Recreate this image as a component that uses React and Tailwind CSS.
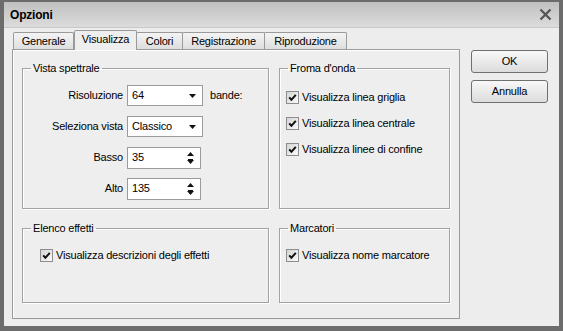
import React from 'react';

function Check({ label }) {
  return (
    <div className="flex items-center h-[16px]">
      <span className="w-[13px] h-[13px] border border-[#8d8d8d] bg-gradient-to-br from-[#d4d4d4] to-[#fbfbfb] flex items-center justify-center">
        <svg width="9" height="9" viewBox="0 0 9 9">
          <path d="M1.2 4.4 L3.4 6.8 L7.8 1.8" fill="none" stroke="#111" strokeWidth="2" />
        </svg>
      </span>
      <span className="ml-[3px] text-[11px] text-black leading-none">{label}</span>
    </div>
  );
}

function DownArrow() {
  return (
    <svg width="7" height="4" viewBox="0 0 7 4">
      <polygon points="0,0 7,0 3.5,4" fill="#111" />
    </svg>
  );
}

function Combo({ value }) {
  return (
    <div className="w-[76px] h-[21px] bg-white border border-[#9b9b9b] flex items-center pl-[4px] pr-[6px]">
      <span className="flex-1 text-[11px] leading-none">{value}</span>
      <DownArrow />
    </div>
  );
}

function Spin({ value }) {
  return (
    <div className="w-[74px] h-[22px] bg-white border border-[#9b9b9b] flex items-center pl-[4px] pr-[6px]">
      <span className="flex-1 text-[11px] leading-none">{value}</span>
      <div className="flex flex-col items-center gap-[3px]">
        <svg width="7" height="4" viewBox="0 0 7 4">
          <polygon points="0,4 7,4 3.5,0" fill="#111" />
        </svg>
        <svg width="7" height="5" viewBox="0 0 7 5">
          <rect x="1" y="0" width="5" height="1" fill="#111" />
          <polygon points="0,1 7,1 3.5,5" fill="#111" />
        </svg>
      </div>
    </div>
  );
}

function Group({ title, className, children }) {
  return (
    <fieldset className={`border border-[#a2a2a2] shadow-[inset_1px_1px_0_#fff,1px_1px_0_#fff] ${className}`}>
      <legend className="ml-[8px] px-[2px] text-[11px] leading-[13px] text-black">{title}</legend>
      {children}
    </fieldset>
  );
}

function Row({ label, children }) {
  return (
    <div className="flex items-center h-[21px]">
      <span className="w-[104px] text-right text-[11px] pr-[4px]">{label}</span>
      {children}
    </div>
  );
}

export default function App() {
  const tabs = [
    { name: 'Generale', w: 'w-[61px]' },
    { name: 'Visualizza', w: 'w-[63px]', active: true },
    { name: 'Colori', w: 'w-[47px]' },
    { name: 'Registrazione', w: 'w-[83px]' },
    { name: 'Riproduzione', w: 'w-[83px]' },
  ];

  return (
    <div className="w-[563px] h-[331px] flex flex-col bg-[#ededed] border-t-[2px] border-x-[4px] border-b-[5px] border-[#6c6c6c] font-['Liberation_Sans',Arial,sans-serif] tracking-[-0.2px] text-black">
      {/* Title bar */}
      <div className="h-[26px] flex items-center justify-between pl-[6px] pr-[7px] bg-gradient-to-b from-[#c0c0c0] to-[#dcdcdc] border-b border-[#c8c8c8]">
        <span className="text-[12px] font-bold leading-none">Opzioni</span>
        <svg width="13" height="13" viewBox="0 0 13 13">
          <path d="M1.5 1.5 L11.5 11.5 M11.5 1.5 L1.5 11.5" stroke="#555" strokeWidth="2.3" />
        </svg>
      </div>

      <div className="flex-1 flex pl-[8px] pt-[2px]">
        {/* Tabs + panel */}
        <div className="w-[448px] flex flex-col">
          <div className="h-[19px] flex items-end pl-px">
            {tabs.map((t) =>
              t.active ? (
                <div
                  key={t.name}
                  className={`${t.w} h-[20px] -mb-px relative z-10 bg-[#eeeeee] border border-b-0 border-[#9a9a9a] rounded-t-[2px] flex items-center justify-center text-[11px] pb-[2px]`}
                >
                  {t.name}
                </div>
              ) : (
                <div
                  key={t.name}
                  className={`${t.w} h-[17px] bg-gradient-to-b from-[#f4f4f4] to-[#dedede] border border-b-0 border-[#9a9a9a] -ml-px first:ml-0 rounded-t-[2px] flex items-center justify-center text-[11px]`}
                >
                  {t.name}
                </div>
              )
            )}
          </div>

          <div className="h-[270px] bg-[#eeeeee] border border-[#9a9a9a] shadow-[inset_1px_1px_0_#fff] pl-[9px] pt-[12px]">
            <div className="flex gap-[10px]">
              <Group title="Vista spettrale" className="w-[247px] h-[147px]">
                <div className="flex flex-col gap-[10px] pt-[10px]">
                  <Row label="Risoluzione">
                    <Combo value="64" />
                    <span className="ml-[7px] text-[11px]">bande:</span>
                  </Row>
                  <Row label="Seleziona vista">
                    <Combo value="Classico" />
                  </Row>
                  <Row label="Basso">
                    <Spin value="35" />
                  </Row>
                  <Row label="Alto">
                    <Spin value="135" />
                  </Row>
                </div>
              </Group>
              <Group title="Froma d'onda" className="w-[171px] h-[147px]">
                <div className="flex flex-col gap-[10px] pt-[14px] pl-[6px]">
                  <Check label="Visualizza linea griglia" />
                  <Check label="Visualizza linea centrale" />
                  <Check label="Visualizza linee di confine" />
                </div>
              </Group>
            </div>
            <div className="flex gap-[10px] mt-[13px]">
              <Group title="Elenco effetti" className="w-[247px] h-[81px]">
                <div className="pt-[12px] pl-[17px]">
                  <Check label="Visualizza descrizioni degli effetti" />
                </div>
              </Group>
              <Group title="Marcatori" className="w-[171px] h-[81px]">
                <div className="pt-[12px] pl-[6px]">
                  <Check label="Visualizza nome marcatore" />
                </div>
              </Group>
            </div>
          </div>
        </div>

        {/* Buttons */}
        <div className="ml-[11px] mt-[20px] flex flex-col gap-[7px]">
          <button className="w-[77px] h-[23px] border border-[#707070] rounded-[3px] bg-gradient-to-b from-[#f8f8f8] to-[#dcdcdc] text-[11px]">
            OK
          </button>
          <button className="w-[77px] h-[23px] border border-[#707070] rounded-[3px] bg-gradient-to-b from-[#f8f8f8] to-[#dcdcdc] text-[11px]">
            Annulla
          </button>
        </div>
      </div>
    </div>
  );
}
